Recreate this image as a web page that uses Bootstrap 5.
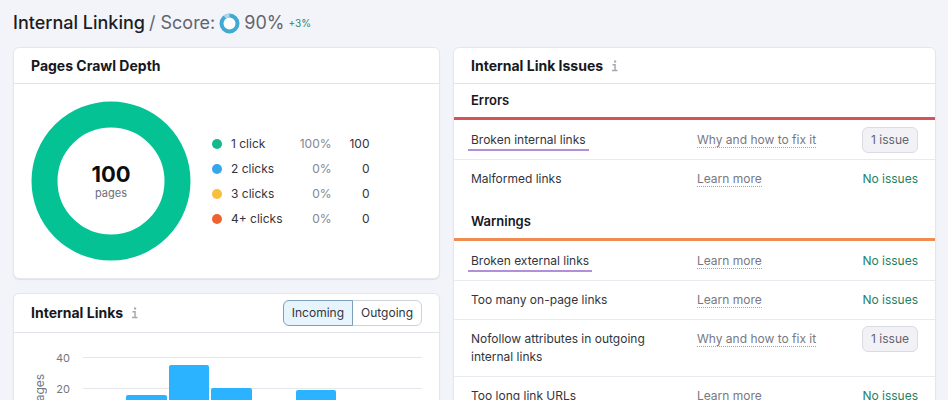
<!DOCTYPE html>
<html lang="en">
<head>
<meta charset="utf-8">
<meta name="viewport" content="width=device-width, initial-scale=1">
<title>Internal Linking</title>
<link href="https://cdn.jsdelivr.net/npm/bootstrap@5.3.0/dist/css/bootstrap.min.css" rel="stylesheet">
<style>
  html { scrollbar-width: none; }
  body { background: #f3f4f9; color: #33343c; font: 400 12px/18px Inter, "Liberation Sans", sans-serif; }
  .page { padding: 11px 12px 12px 13px; }
  .page-title { font-size: 18px; line-height: 24px; font-weight: 500; color: #1c1d24; }
  .page-title .score { font-weight: 400; color: #62646f; }
  .page-title .delta { font-size: 10px; font-weight: 400; color: #2c8a6c; }
  .dash { display: grid; grid-template-columns: minmax(0, 427fr) minmax(0, 483fr); gap: 13px; align-items: start; }
  .left-stack { display: grid; gap: 14px; }
  .panel { background: #fff; border: 1px solid #e4e6ef; border-radius: 6px; box-shadow: 0 1px 1px #dfe1ea; overflow: hidden; }
  .panel-head { min-height: 36px; padding: 0 17px; border-bottom: 1px solid #e1e3ea; }
  .panel-head.tall { min-height: 39px; }
  .panel-head h2 { font-size: 14px; line-height: 18px; font-weight: 700; color: #17181e; margin: 0; }
  .info { width: 8px; height: 12px; stroke: #a6a8b0; fill: none; }

  .depth { padding: 17px; gap: 21px; }
  .ring-box { width: 160px; height: 160px; display: grid; place-items: center; }
  .ring-box > * { grid-area: 1 / 1; }
  .ring-total { font-size: 22px; line-height: 24px; font-weight: 700; color: #0c0d10; }
  .ring-unit { font-size: 11px; line-height: 14px; color: #6c6e79; }
  .legend-table td, .legend-table th { padding: 4px 0 3px; font-weight: 400; }
  .legend-table .share { width: 49px; color: #84868f; }
  .legend-table .total { width: 38px; }
  .dot { width: 10px; height: 10px; border-radius: 50%; margin-right: 9px; vertical-align: -1px; }
  .dot-1 { background: #12b98c; } .dot-2 { background: #36a7ec; }
  .dot-3 { background: #f9be3b; } .dot-4 { background: #ee6430; }

  .toggle .btn { font-size: 12px; line-height: 18px; padding: 3px 8px; border-color: #cfd1da; color: #33343c; border-radius: 6px; }
  .toggle .btn.active { background: #e6f4fe; border-color: #7d9fb8; color: #33343c; }

  .chart { padding: 16px 17px 17px; color: #75777f; }
  .axis-name { writing-mode: vertical-rl; transform: rotate(180deg); margin-top: 24px; width: 18px; line-height: 18px; height: 36px; }
  .ticks { width: 21px; font-size: 11px; }
  .ticks span, .plot i { display: block; height: 31px; }
  .plot { display: grid; margin-left: 13px; padding-top: 8px; }
  .plot > * { grid-area: 1 / 1; }
  .plot i { border-top: 1px solid #e6e7ec; }
  .bars { height: 62px; z-index: 1; }
  .bars div { flex: 1; margin: 0 1px; background: #2bb3ff; border-radius: 2px 2px 0 0; }

  .issues { table-layout: fixed; width: 100%; margin: 0; }
  .issues col.c-help { width: 145px; }
  .issues col.c-state { width: 93px; }
  .issues td { padding: 10px 0; border-bottom: 1px solid #e8eaef; }
  .issues td:first-child { padding-left: 17px; padding-right: 32px; }
  .issues td:last-child { padding-right: 17px; text-align: right; }
  .issues .group th { padding: 7px 17px 8px; font-size: 13px; font-weight: 600; color: #17181e; border-bottom: 3px solid #d4545a; }
  .issues .group.warn th { padding-top: 14px; border-color: #ee8c53; }
  .issues .group + tr td { padding-top: 11px; }
  .issues .last td { border-bottom: 0; }
  .help { color: #777982; text-decoration: none; display: inline-block; line-height: 15px; border-bottom: 1px dotted #a2a4ad; }
  .ok { color: #1f8163; }
  .issue-btn { font-size: 12px; line-height: 18px; padding: 3px 8px; margin: -4px 0; background: #f2f2f6; border: 1px solid #dadce4; border-radius: 6px; color: #63646f; vertical-align: top; }
  .marked { position: relative; }
  .marked::after { content: ""; position: absolute; left: -3px; right: -3px; bottom: -4px; height: 2px; background: #b28fd6; }
</style>
<script src="https://cdn.jsdelivr.net/npm/bootstrap@5.3.0/dist/js/bootstrap.bundle.min.js"></script>
</head>
<body>
<main class="container-fluid page">
  <h1 class="page-title d-flex align-items-center mb-0">
    <span>Internal Linking</span><span class="score ms-1">/ Score:</span>
    <svg class="mx-1" width="21" height="21" viewBox="0 0 21 21" aria-hidden="true">
      <circle cx="10.500" cy="10.500" r="8" fill="#fff" stroke="#3faad2" stroke-width="4"/>
      <path d="M5.800 4A8 8 0 0 1 10.500 2.500" fill="none" stroke="#acd8eb" stroke-width="4"/>
    </svg>
    <span class="score">90%</span><span class="delta ms-1">+3%</span>
  </h1>
  <div class="dash mt-2 pt-1">
    <div class="left-stack">
      <section class="panel">
        <div class="panel-head d-flex align-items-center"><h2>Pages Crawl Depth</h2></div>
        <div class="depth d-flex align-items-center">
          <div class="ring-box">
            <svg width="160" height="160" viewBox="0 0 160 160" aria-hidden="true"><circle cx="80" cy="80" r="66.500" fill="none" stroke="#04c293" stroke-width="26"/></svg>
            <div class="text-center"><div class="ring-total">100</div><div class="ring-unit">pages</div></div>
          </div>
          <table class="legend-table">
            <tbody>
              <tr><th scope="row"><span class="dot dot-1 d-inline-block"></span>1 click</th><td class="share text-end">100%</td><td class="total text-end">100</td></tr>
              <tr><th scope="row"><span class="dot dot-2 d-inline-block"></span>2 clicks</th><td class="share text-end">0%</td><td class="total text-end">0</td></tr>
              <tr><th scope="row"><span class="dot dot-3 d-inline-block"></span>3 clicks</th><td class="share text-end">0%</td><td class="total text-end">0</td></tr>
              <tr><th scope="row"><span class="dot dot-4 d-inline-block"></span>4+ clicks</th><td class="share text-end">0%</td><td class="total text-end">0</td></tr>
            </tbody>
          </table>
        </div>
      </section>
      <section class="panel">
        <div class="panel-head tall d-flex align-items-center">
          <h2>Internal Links</h2>
          <svg class="info ms-2" viewBox="0 0 8 12" aria-hidden="true"><path d="M1.500 4.800H4V10.500M1 10.500H6.500" stroke-width="1.500"/><path d="M3 1.500H5.200" stroke-width="2"/></svg>
          <div class="btn-group toggle ms-auto" role="group" aria-label="Link direction">
            <button type="button" class="btn active" aria-pressed="true">Incoming</button>
            <button type="button" class="btn">Outgoing</button>
          </div>
        </div>
        <div class="chart d-flex">
          <div class="axis-name">Pages</div>
          <div class="ticks text-end"><span>40</span><span>20</span><span>0</span></div>
          <div class="plot flex-grow-1">
            <div><i></i><i></i><i></i></div>
            <div class="bars d-flex align-items-end">
              <div style="height: 0%"></div><div style="height: 39%"></div><div style="height: 87%"></div><div style="height: 50%"></div>
              <div style="height: 0%"></div><div style="height: 47%"></div><div style="height: 0%"></div><div style="height: 0%"></div>
            </div>
          </div>
        </div>
      </section>
    </div>
    <section class="panel">
      <div class="panel-head d-flex align-items-center">
        <h2>Internal Link Issues</h2>
        <svg class="info ms-2" viewBox="0 0 8 12" aria-hidden="true"><path d="M1.500 4.800H4V10.500M1 10.500H6.500" stroke-width="1.500"/><path d="M3 1.500H5.200" stroke-width="2"/></svg>
      </div>
      <table class="issues">
        <colgroup><col><col class="c-help"><col class="c-state"></colgroup>
        <tbody>
          <tr class="group"><th colspan="3" scope="colgroup">Errors</th></tr>
          <tr><td><span class="marked">Broken internal links</span></td><td><a class="help" href="#">Why and how to fix it</a></td><td><button type="button" class="issue-btn">1 issue</button></td></tr>
          <tr class="last"><td>Malformed links</td><td><a class="help" href="#">Learn more</a></td><td class="ok">No issues</td></tr>
          <tr class="group warn"><th colspan="3" scope="colgroup">Warnings</th></tr>
          <tr><td><span class="marked">Broken external links</span></td><td><a class="help" href="#">Learn more</a></td><td class="ok">No issues</td></tr>
          <tr><td>Too many on-page links</td><td><a class="help" href="#">Learn more</a></td><td class="ok">No issues</td></tr>
          <tr><td>Nofollow attributes in outgoing internal links</td><td class="align-top"><a class="help" href="#">Why and how to fix it</a></td><td class="align-top"><button type="button" class="issue-btn">1 issue</button></td></tr>
          <tr><td>Too long link URLs</td><td><a class="help" href="#">Learn more</a></td><td class="ok">No issues</td></tr>
        </tbody>
      </table>
    </section>
  </div>
</main>
</body>
</html>
